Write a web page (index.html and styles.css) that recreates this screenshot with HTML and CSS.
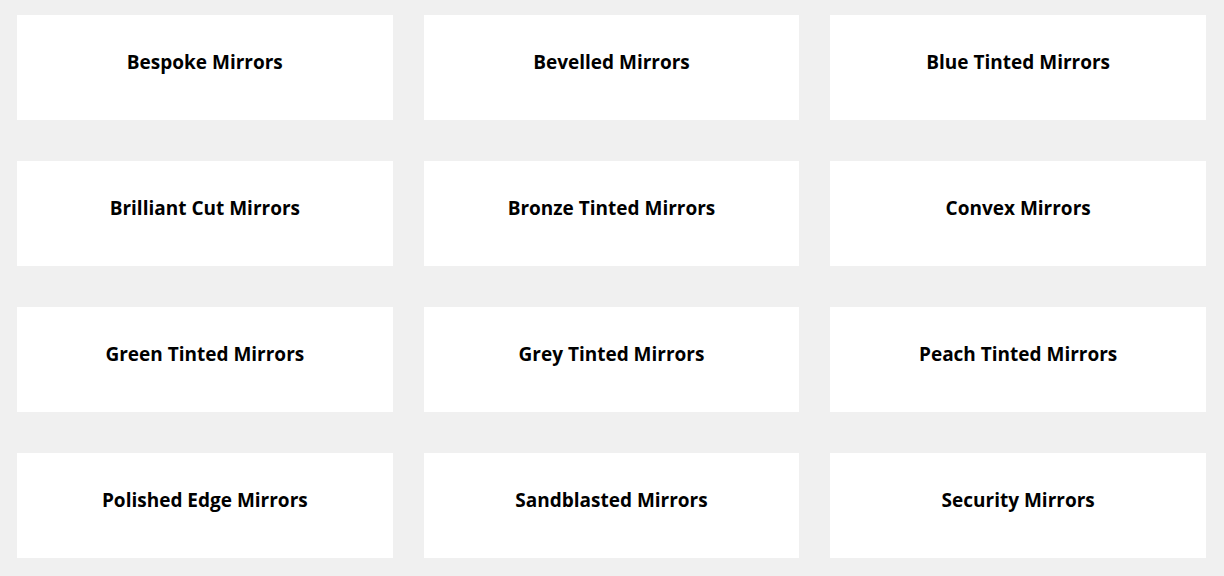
FILE: index.html
```html
<!DOCTYPE html>
<html lang="en">
<head>
    <meta charset="UTF-8" />
    <meta name="viewport" content="width=device-width, initial-scale=1.0"/>
    <title>Mirror Types</title>
    <link rel="stylesheet" href="styles.css">
</head>
<body>

    <div class="mirror-grid">
        <a class="mirror-card" href="#"><span>Bespoke Mirrors</span></a>
        <a class="mirror-card" href="#"><span>Bevelled Mirrors</span></a>
        <a class="mirror-card" href="#"><span>Blue Tinted Mirrors</span></a>
        <a class="mirror-card" href="#"><span>Brilliant Cut Mirrors</span></a>
        <a class="mirror-card" href="#"><span>Bronze Tinted Mirrors</span></a>
        <a class="mirror-card" href="#"><span>Convex Mirrors</span></a>
        <a class="mirror-card" href="#"><span>Green Tinted Mirrors</span></a>
        <a class="mirror-card" href="#"><span>Grey Tinted Mirrors</span></a>
        <a class="mirror-card" href="#"><span>Peach Tinted Mirrors</span></a>
        <a class="mirror-card" href="#"><span>Polished Edge Mirrors</span></a>
        <a class="mirror-card" href="#"><span>Sandblasted Mirrors</span></a>
        <a class="mirror-card" href="#"><span>Security Mirrors</span></a>
    </div>

</body>
</html>
```

FILE: styles.css
```css
body {
    font-family: 'Open Sans', 'Liberation Sans', Arial, sans-serif;
    background: #f0f0f0;
    color: #000;
    margin: 0;
    padding: 15px 18px 0 17px;
}
.mirror-grid {
    display: grid;
    grid-template-columns: repeat(3, 1fr);
    column-gap: 31px;
    row-gap: 41px;
}
.mirror-card {
    display: flex;
    justify-content: center;
    height: 105px;
    padding-top: 35px;
    box-sizing: border-box;
    background: #fff;
    color: #000;
    text-decoration: none;
    font-size: 19px;
    font-weight: 700;
    line-height: 24px;
}
```
